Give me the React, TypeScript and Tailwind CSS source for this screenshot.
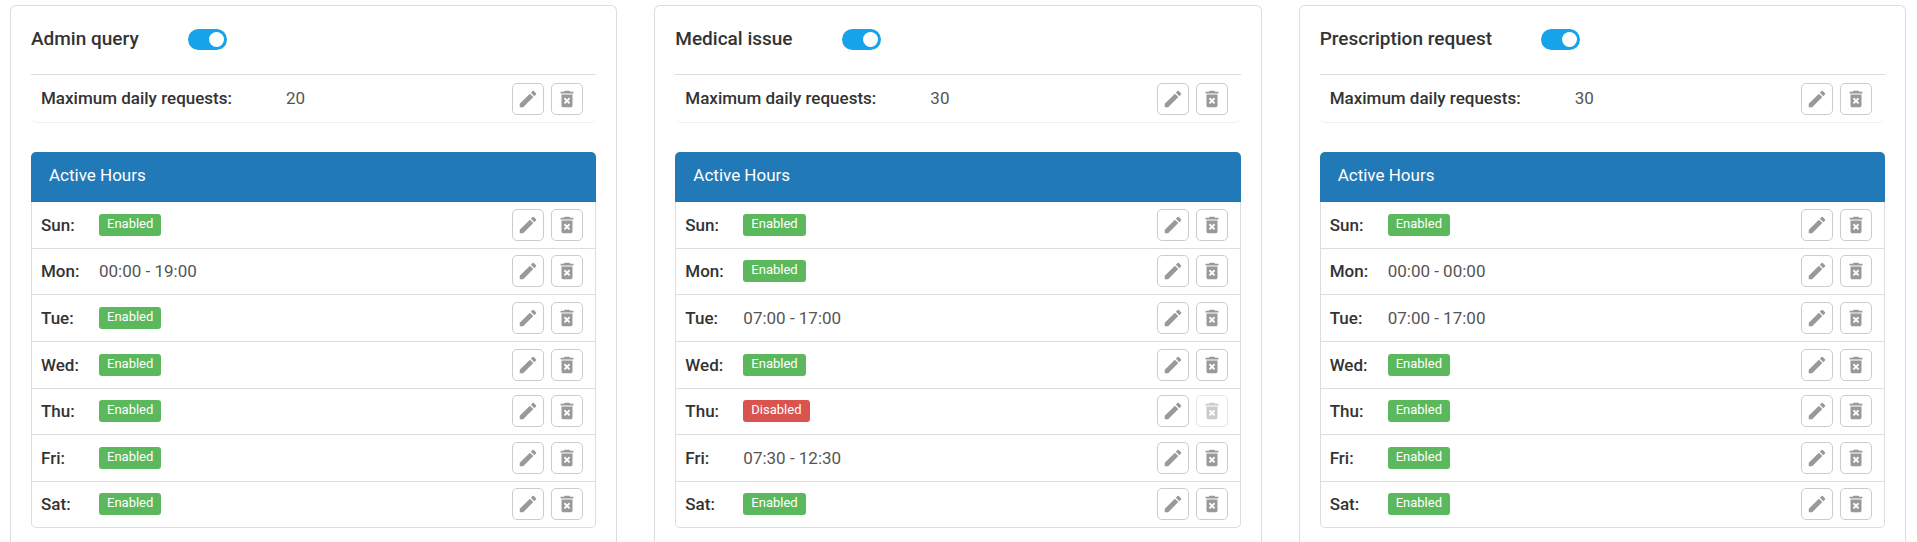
import { useState } from "react";

type Slot = { day: string; value: string };
type Service = { id: string; title: string; max: number; slots: Slot[] };

const DAYS = ["Sun", "Mon", "Tue", "Wed", "Thu", "Fri", "Sat"];

const week = (overrides: Record<string, string>): Slot[] =>
  DAYS.map((day) => ({ day, value: overrides[day] ?? "Enabled" }));

const SERVICES: Service[] = [
  { id: "admin", title: "Admin query", max: 20, slots: week({ Mon: "00:00 - 19:00" }) },
  {
    id: "medical",
    title: "Medical issue",
    max: 30,
    slots: week({ Tue: "07:00 - 17:00", Thu: "Disabled", Fri: "07:30 - 12:30" }),
  },
  {
    id: "prescription",
    title: "Prescription request",
    max: 30,
    slots: week({ Mon: "00:00 - 00:00", Tue: "07:00 - 17:00" }),
  },
];

function PencilIcon() {
  return (
    <svg viewBox="0 0 24 24" className="size-[22px]" fill="currentColor" aria-hidden="true">
      <path d="M3 17.25V21h3.75L17.81 9.94l-3.75-3.75L3 17.25zM20.71 7.04a1 1 0 0 0 0-1.41l-2.34-2.34a1 1 0 0 0-1.41 0l-1.83 1.83 3.75 3.75 1.83-1.83z" />
    </svg>
  );
}

function TrashIcon() {
  return (
    <svg viewBox="0 0 24 24" className="size-[22px]" fill="currentColor" aria-hidden="true">
      <path
        fillRule="evenodd"
        d="M6 19c0 1.1.9 2 2 2h8c1.1 0 2-.9 2-2V7H6v12zm2.46-7.12 1.41-1.41L12 12.59l2.12-2.12 1.41 1.41L13.41 14l2.12 2.12-1.41 1.41L12 15.41l-2.12 2.12-1.41-1.41L10.59 14l-2.13-2.12zM15.5 4l-1-1h-5l-1 1H5v2h14V4z"
      />
    </svg>
  );
}

function Actions({ label, locked = false }: { label: string; locked?: boolean }) {
  const button =
    "flex size-8 items-center justify-center rounded-[5px] border border-[#ccc] bg-white text-[#999] disabled:opacity-50";
  return (
    <div className="flex justify-end gap-[7px]">
      <button type="button" className={button} aria-label={`Edit ${label}`}>
        <PencilIcon />
      </button>
      <button type="button" className={button} aria-label={`Delete ${label}`} disabled={locked}>
        <TrashIcon />
      </button>
    </div>
  );
}

function SlotValue({ value }: { value: string }) {
  if (value === "Enabled" || value === "Disabled") {
    const tone = value === "Enabled" ? "bg-[#5cb85c]" : "bg-[#d9534f]";
    return (
      <span className={`block w-fit rounded-[3px] px-2 pb-0.5 text-[13px] leading-5 text-white ${tone}`}>
        {value}
      </span>
    );
  }
  return <span>{value}</span>;
}

function ServiceCard({ service }: { service: Service }) {
  const [on, setOn] = useState(true);
  return (
    <section className="rounded-t-md border border-b-0 border-[#ddd] bg-white px-5 pb-[15px]">
      <div className="flex h-[68px] items-center gap-[49px] pb-0.5">
        <label htmlFor={service.id} className="text-[19px] font-medium text-[#333]">
          {service.title}
        </label>
        <input
          id={service.id}
          type="checkbox"
          role="switch"
          checked={on}
          onChange={(e) => setOn(e.target.checked)}
          className="h-[21px] w-[39px] appearance-none rounded-full bg-[#bbb] p-[3px] before:block before:size-[15px] before:rounded-full before:bg-white checked:bg-[#16a3ea] checked:before:ml-auto"
        />
      </div>

      <div className="flex h-[49px] items-center rounded-b-md border-t border-b border-t-[#ddd] border-b-[#eee] pr-[13px] pl-2.5">
        <span className="w-[245px] pb-0.5 font-medium text-[#333]">Maximum daily requests:</span>
        <span className="flex-1 pb-0.5">{service.max}</span>
        <Actions label="maximum daily requests" />
      </div>

      <h2 className="mt-[29px] rounded-t-[5px] bg-[#2179b8] px-[18px] pt-[11px] pb-[15px] leading-6 text-white">
        Active Hours
      </h2>
      <div className="rounded-b-[5px] border border-t-0 border-[#ddd]">
        <table className="h-[325px] w-full border-separate border-spacing-0">
          <tbody>
            {service.slots.map(({ day, value }) => (
              <tr key={day} className="group">
                <th scope="row" className="w-[67px] border-b border-[#ddd] pl-[9px] text-left font-medium text-[#333] group-last:border-b-0">
                  {day}:
                </th>
                <td className="border-b border-[#ddd] group-last:border-b-0">
                  <SlotValue value={value} />
                </td>
                <td className="border-b border-[#ddd] pr-3 group-last:border-b-0">
                  <Actions label={day} locked={value === "Disabled"} />
                </td>
              </tr>
            ))}
          </tbody>
        </table>
      </div>
    </section>
  );
}

export default function App() {
  return (
    <main className="grid min-h-screen grid-cols-3 gap-[37px] bg-white pt-[5px] pr-[11px] pl-2.5 font-['Roboto',sans-serif] text-[17px] leading-6 text-[#555]">
      {SERVICES.map((service) => (
        <ServiceCard key={service.id} service={service} />
      ))}
    </main>
  );
}
